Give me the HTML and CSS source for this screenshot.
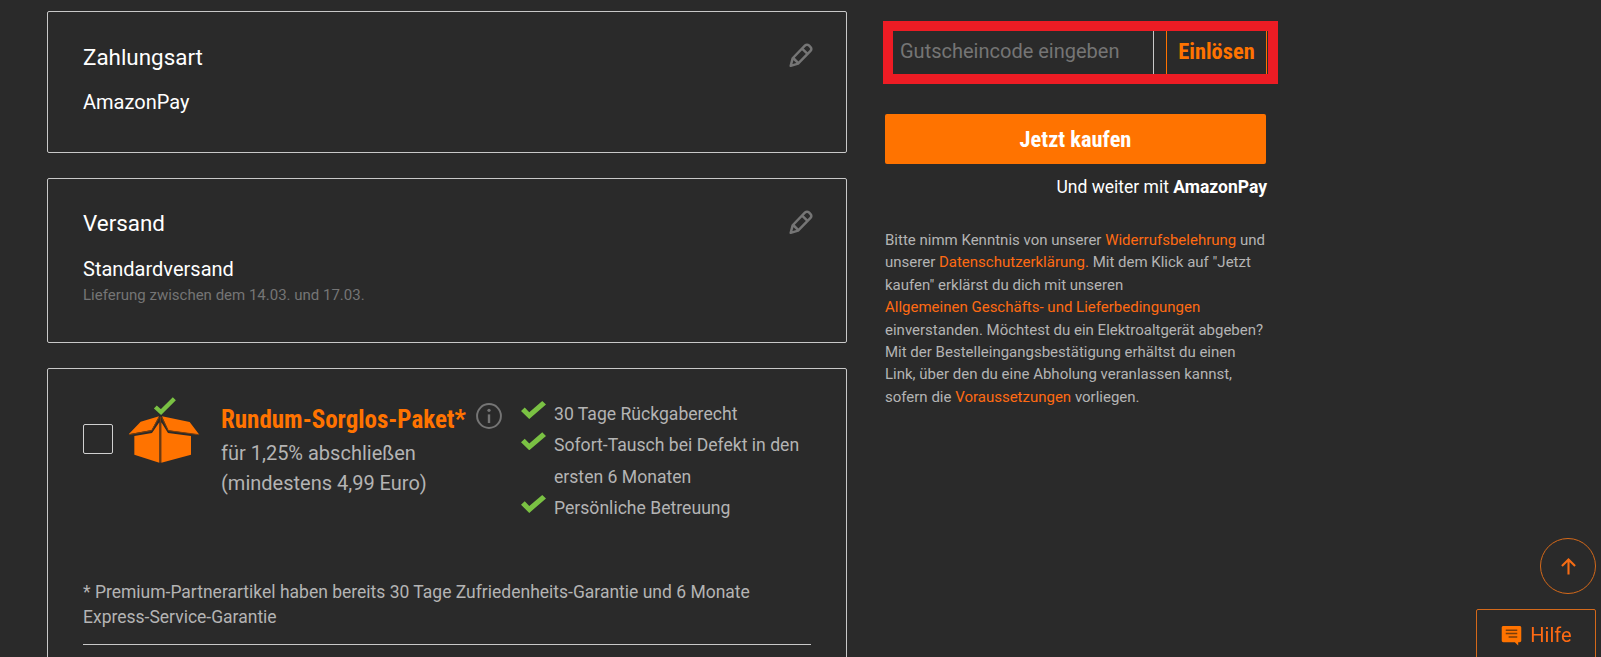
FILE: index.html
```html
<!DOCTYPE html>
<html lang="de">
<head>
    <meta charset="UTF-8">
    <meta name="viewport" content="width=device-width, initial-scale=1.0">
    <title>Kasse</title>
    <link rel="stylesheet" href="styles.css">
</head>
<body>

<div class="page">
    <div class="left-col">
        <div class="card card-pay">
            <div class="card-head">
                <h3>Zahlungsart</h3>
                <svg class="edit" viewBox="0 0 24 24"><path d="M2.500 22l1.800-7L15.800 3.200c1-1 2.500-1 3.500 0l1.500 1.500c1 1 1 2.500 0 3.500L9.300 20z M5 15l4.300 4.300 M13.500 6.500l3.800 3.800" fill="none" stroke="#757575" stroke-width="2.300" stroke-linejoin="round"/></svg>
            </div>
            <p class="value">AmazonPay</p>
        </div>

        <div class="card card-ship">
            <div class="card-head">
                <h3>Versand</h3>
                <svg class="edit" viewBox="0 0 24 24"><path d="M2.500 22l1.800-7L15.800 3.200c1-1 2.500-1 3.500 0l1.500 1.500c1 1 1 2.500 0 3.500L9.300 20z M5 15l4.300 4.300 M13.500 6.500l3.800 3.800" fill="none" stroke="#757575" stroke-width="2.300" stroke-linejoin="round"/></svg>
            </div>
            <p class="value">Standardversand</p>
            <p class="hint">Lieferung zwischen dem 14.03. und 17.03.</p>
        </div>

        <div class="card card-extra">
            <div class="extra-row">
                <span class="checkbox"></span>
                <svg class="box-icon" viewBox="204 55 214 198">
                    <path d="M285 85l17 15 40-40" fill="none" stroke="#7ac143" stroke-width="13"/>
                    <path d="M222 172l53-9 22-32v121l-75-24z M303 131l20 32 69 9v56l-89 24z" fill="#ff7300"/>
                    <path d="M205 167l36-38 55-16-22 41z M305 113l83 17 29 38-93-13z" fill="#ff7300"/>
                    <path d="M300 114v138 M296 116l-22 40-68 12 M304 116l20 40 92 12" fill="none" stroke="#7a3d0a" stroke-width="3"/>
                </svg>
                <div class="extra-text">
                    <div class="extra-title">
                        <span>Rundum-Sorglos-Paket*</span>
                        <svg class="info" viewBox="0 0 24 24"><circle cx="12" cy="12" r="11" fill="none" stroke="#757575" stroke-width="1.800"/><circle cx="12" cy="6.800" r="1.500" fill="#757575"/><path d="M12 10.500v8" stroke="#757575" stroke-width="2.200"/></svg>
                    </div>
                    <p>für 1,25% abschließen<br>(mindestens 4,99 Euro)</p>
                </div>
                <ul class="benefits">
                    <li>30 Tage Rückgaberecht</li>
                    <li>Sofort-Tausch bei Defekt in den ersten 6 Monaten</li>
                    <li>Persönliche Betreuung</li>
                </ul>
            </div>
            <p class="footnote">* Premium-Partnerartikel haben bereits 30 Tage Zufriedenheits-Garantie und 6 Monate Express-Service-Garantie</p>
            <hr>
        </div>
    </div>

    <div class="right-col">
        <form class="voucher">
            <input type="text" placeholder="Gutscheincode eingeben">
            <button type="button">Einlösen</button>
        </form>
        <a class="buy" href="#">Jetzt kaufen</a>
        <p class="pay-note">Und weiter mit <b>AmazonPay</b></p>
        <p class="legal">Bitte nimm Kenntnis von unserer <a href="#">Widerrufsbelehrung</a> und unserer <a href="#">Datenschutzerklärung.</a> Mit dem Klick auf "Jetzt kaufen" erklärst du dich mit unseren <a class="block-link" href="#">Allgemeinen Geschäfts- und Lieferbedingungen</a> einverstanden. Möchtest du ein Elektroaltgerät abgeben? Mit der Bestelleingangsbestätigung erhältst du einen Link, über den du eine Abholung veranlassen kannst, sofern die <a href="#">Voraussetzungen</a> vorliegen.</p>
    </div>
</div>

<a class="to-top" href="#"><svg viewBox="0 0 24 24"><path d="M12 21V4M4.500 11.500L12 4l7.500 7.500" fill="none" stroke="#f56c14" stroke-width="2.400"/></svg></a>
<a class="help" href="#"><svg viewBox="0 0 24 24"><path d="M3.500 2h17c1 0 1.700.7 1.700 1.700v13.600c0 1-.7 1.700-1.700 1.700H19v3.500L15.500 19h-12c-1 0-1.700-.7-1.700-1.700V3.700C1.800 2.700 2.500 2 3.500 2z" fill="#ff7300"/><path d="M6 6.500h12M6 10h12M9 13.500h9" stroke="#7a3d0a" stroke-width="1.600"/></svg>Hilfe</a>

</body>
</html>
```

FILE: styles.css
```css
html, body {
    height: 100%;
}
body {
    margin: 0;
    background-color: #2a2a2a;
    color: #fff;
    font-family: Roboto, "Liberation Sans", sans-serif;
    overflow: hidden;
}
a {
    text-decoration: none;
}
p {
    margin: 0;
}
.page {
    display: flex;
    gap: 38px;
    padding: 11px 0 0 47px;
}
.left-col {
    width: 800px;
    flex-shrink: 0;
}
.right-col {
    width: 382px;
    flex-shrink: 0;
    padding-top: 10px;
}

/* cards */
.card {
    box-sizing: border-box;
    border: 1px solid #c8c8c8;
    border-radius: 2px;
    padding: 33px 35px 0;
    margin-bottom: 25px;
}
.card-pay {
    height: 142px;
}
.card-ship {
    height: 165px;
}
.card-extra {
    padding-top: 32px;
    height: 400px;
}
.card-head {
    display: flex;
    justify-content: space-between;
    align-items: flex-start;
}
.card-head h3 {
    margin: -1px 0 1px;
    font-size: 22.400px;
    font-weight: 400;
    line-height: 26px;
}
.card-ship .card-head h3 {
    margin: -2px 0 2px;
}
.edit {
    width: 26px;
    height: 26px;
    margin-right: -3px;
    margin-top: -3px;
}
.value {
    margin-top: 19px;
    font-size: 20px;
    line-height: 24px;
}
.hint {
    margin-top: 5px;
    font-size: 15px;
    line-height: 18px;
    color: #757575;
}

/* package offer */
.extra-row {
    display: flex;
    align-items: flex-start;
}
.checkbox {
    box-sizing: border-box;
    width: 30px;
    height: 30px;
    margin-top: 23px;
    border: 1px solid #d0d0d0;
    border-radius: 2px;
    flex-shrink: 0;
}
.box-icon {
    width: 72px;
    height: 66px;
    margin: -4px 0 0 15px;
    flex-shrink: 0;
}
.extra-text {
    margin-left: 21px;
    width: 299px;
    flex-shrink: 0;
}
.extra-title {
    display: flex;
    align-items: center;
    gap: 10px;
    height: 30px;
    margin-top: 3px;
    font-size: 25px;
    font-weight: 700;
    color: #ff7300;
}
.extra-title span {
    font-stretch: condensed;
    white-space: nowrap;
}
.info {
    width: 26px;
    height: 26px;
    flex-shrink: 0;
    margin-top: -6px;
}
.extra-text p {
    margin-top: 4px;
    font-size: 20px;
    line-height: 30px;
    color: #b4b4b4;
}
.benefits {
    list-style: none;
    margin: -2px 0 0;
    padding: 0;
    width: 285px;
    font-size: 17.600px;
    line-height: 31.300px;
    color: #b4b4b4;
}
.benefits li {
    position: relative;
    padding-left: 34px;
}
.benefits li::before {
    content: "";
    position: absolute;
    left: 1px;
    top: 2px;
    width: 25px;
    height: 18px;
    background-color: #7ac143;
    clip-path: polygon(0 55%, 15% 36%, 33% 62%, 85% 0, 100% 20%, 33% 100%);
}
.footnote {
    margin-top: 56px;
    font-size: 17.500px;
    line-height: 25px;
    color: #b4b4b4;
}
.card hr {
    margin: 14px 0 0;
    border: 0;
    border-top: 1px solid #c8c8c8;
}

/* right column */
.voucher {
    box-sizing: border-box;
    display: flex;
    width: 395px;
    height: 63px;
    margin-left: -2px;
    border: 10px solid #ed1c24;
    background-color: #2a2a2a;
}
.voucher input {
    box-sizing: border-box;
    width: 261px;
    height: 43px;
    border: 0;
    border-right: 1px solid #c8c8c8;
    outline: 0;
    padding: 0 7px 4px;
    background: none;
    font-family: inherit;
    font-size: 20px;
    color: #fff;
}
.voucher input::placeholder {
    color: #757575;
    opacity: 1;
}
.voucher button {
    box-sizing: border-box;
    width: 101px;
    height: 43px;
    margin-left: 12px;
    padding: 0 0 4px;
    border: 0;
    border-left: 1px solid #ff7300;
    border-right: 1px solid #ff7300;
    background: none;
    font-family: inherit;
    font-size: 22.400px;
    font-weight: 700;
    font-stretch: condensed;
    color: #ff7300;
}
.buy {
    display: block;
    width: 381px;
    height: 50px;
    margin-top: 30px;
    border-radius: 2px;
    background-color: #ff7300;
    color: #fff;
    font-size: 22.400px;
    font-weight: 700;
    font-stretch: condensed;
    line-height: 50px;
    text-align: center;
}
.pay-note {
    width: 382px;
    margin-top: 13px;
    font-size: 17.500px;
    line-height: 20px;
    text-align: right;
}
.legal {
    width: 382px;
    margin-top: 32px;
    font-size: 15px;
    line-height: 22.400px;
    color: #b4b4b4;
}
.legal a {
    color: #ff6a13;
}
.legal .block-link {
    display: block;
}

/* floating buttons */
.to-top {
    position: fixed;
    left: 1540px;
    top: 538px;
    box-sizing: border-box;
    width: 56px;
    height: 56px;
    border: 1px solid #d4691a;
    border-radius: 50%;
    display: flex;
    align-items: center;
    justify-content: center;
}
.to-top svg {
    width: 21px;
    height: 21px;
}
.help {
    position: fixed;
    left: 1476px;
    top: 609px;
    box-sizing: border-box;
    width: 120px;
    height: 60px;
    border: 1px solid #d4691a;
    border-radius: 2px;
    padding: 0 0 8px;
    display: flex;
    align-items: center;
    justify-content: center;
    gap: 7px;
    color: #ff6a13;
    font-size: 20px;
}
.help svg {
    width: 23px;
    height: 23px;
}
```
